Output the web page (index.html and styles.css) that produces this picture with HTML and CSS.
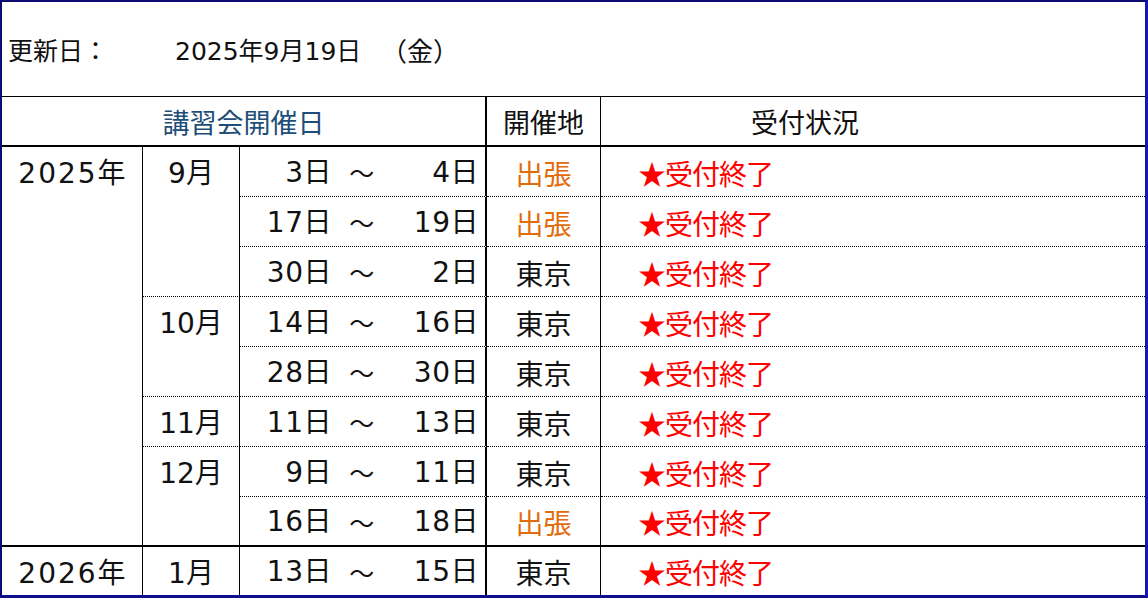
FILE: index.html
```html
<!DOCTYPE html>
<html lang="ja">
<head>
<meta charset="utf-8">
<title>講習会開催日</title>
<link rel="stylesheet" href="styles.css">
</head>
<body>
<div class="sheet">
  <div class="updated">
    <span class="upd-label">更新日：</span>
    <span class="upd-date">2025年9月19日</span>
    <span class="upd-week">（金）</span>
  </div>
  <div class="grid">
    <div class="hd hd-date">講習会開催日</div>
    <div class="hd hd-place">開催地</div>
    <div class="hd hd-status">受付状況</div>

    <div class="year y2025">2025年</div>
    <div class="month m9">9月</div>
    <div class="month m10">10月</div>
    <div class="month m11">11月</div>
    <div class="month m12">12月</div>

    <div class="date r1"><span class="d1">3日</span><span class="til">～</span><span class="d2">4日</span></div>
    <div class="place r1 trip">出張</div>
    <div class="status r1">★受付終了</div>

    <div class="date r2"><span class="d1">17日</span><span class="til">～</span><span class="d2">19日</span></div>
    <div class="place r2 trip">出張</div>
    <div class="status r2">★受付終了</div>

    <div class="date r3"><span class="d1">30日</span><span class="til">～</span><span class="d2">2日</span></div>
    <div class="place r3">東京</div>
    <div class="status r3">★受付終了</div>

    <div class="date r4"><span class="d1">14日</span><span class="til">～</span><span class="d2">16日</span></div>
    <div class="place r4">東京</div>
    <div class="status r4">★受付終了</div>

    <div class="date r5"><span class="d1">28日</span><span class="til">～</span><span class="d2">30日</span></div>
    <div class="place r5">東京</div>
    <div class="status r5">★受付終了</div>

    <div class="date r6"><span class="d1">11日</span><span class="til">～</span><span class="d2">13日</span></div>
    <div class="place r6">東京</div>
    <div class="status r6">★受付終了</div>

    <div class="date r7"><span class="d1">9日</span><span class="til">～</span><span class="d2">11日</span></div>
    <div class="place r7">東京</div>
    <div class="status r7">★受付終了</div>

    <div class="date r8 yearend"><span class="d1">16日</span><span class="til">～</span><span class="d2">18日</span></div>
    <div class="place r8 yearend trip">出張</div>
    <div class="status r8 yearend">★受付終了</div>

    <div class="year y2026">2026年</div>
    <div class="month m1">1月</div>
    <div class="date r9 last"><span class="d1">13日</span><span class="til">～</span><span class="d2">15日</span></div>
    <div class="place r9 last">東京</div>
    <div class="status r9 last">★受付終了</div>
  </div>
</div>
</body>
</html>
```

FILE: styles.css
```css
* { box-sizing: border-box; }
html, body { margin: 0; padding: 0; background: #ffffff; }
body {
  font-family: "DejaVu Sans", "Noto Sans CJK JP", sans-serif;
  color: #111111;
}
.sheet {
  width: 1148px;
  height: 598px;
  border-top: 2px solid #0c0c74;
  border-left: 2px solid #0c0c74;
  border-right: 3px solid #1616b4;
  border-bottom: 3px solid #0e0e8c;
  display: flex;
  flex-direction: column;
  overflow: hidden;
}
.updated {
  height: 95px;
  border-bottom: 1px solid #000;
  display: flex;
  align-items: center;
  padding-left: 6px;
  font-size: 25px;
}
.upd-label { width: 167px; font-family: "Noto Sans CJK JP", sans-serif; }
.upd-date { width: 206px; }
.upd-week { font-family: "Noto Sans CJK JP", sans-serif; font-size: 26px; }

.grid {
  flex: 1;
  display: grid;
  grid-template-columns: 141px 97px 247px 114px 1fr;
  grid-template-rows: 50px repeat(8, 50px) 1fr;
  font-size: 28px;
}
.grid > div {
  display: flex;
  align-items: center;
  line-height: 1;
}
.hd { border-bottom: 2px solid #000; font-size: 27px; }
.hd-date {
  grid-column: 1 / 4;
  justify-content: center;
  color: #1f4e79;
  border-right: 2px solid #000;
  font-family: "Noto Sans CJK JP", sans-serif;
}
.hd-place {
  justify-content: center;
  border-right: 1px solid #000;
  font-family: "Noto Sans CJK JP", sans-serif;
}
.hd-status {
  padding-left: 150px;
  font-family: "Noto Sans CJK JP", sans-serif;
}

.grid > .year, .grid > .month {
  align-items: flex-start;
  justify-content: center;
  padding-top: 13px;
  border-right: 1px solid #000;
}
.year { grid-column: 1; letter-spacing: 2px; padding-left: 2px; }
.y2025 { grid-row: 2 / 10; border-bottom: 2px solid #000; }
.y2026 { grid-row: 10; }
.month { grid-column: 2; }
.m9 { grid-row: 2 / 5; border-bottom: 1px dotted #000; }
.m10 { grid-row: 5 / 7; border-bottom: 1px dotted #000; }
.m11 { grid-row: 7 / 8; border-bottom: 1px dotted #000; }
.m12 { grid-row: 8 / 10; border-bottom: 2px solid #000; }
.m1 { grid-row: 10; }

.date, .place, .status { border-bottom: 1px dotted #000; padding-top: 2px; }
.grid > .date {
  grid-column: 3;
  display: grid;
  grid-template-columns: 92px 60px 1fr;
  align-items: center;
  padding-right: 6px;
  border-right: 2px solid #000;
  letter-spacing: 0.5px;
}
.d1, .d2 { text-align: right; }
.til { text-align: center; font-family: "Noto Sans CJK JP", sans-serif; font-size: 25px; }
.place {
  grid-column: 4;
  justify-content: center;
  border-right: 1px solid #000;
  font-family: "Noto Sans CJK JP", sans-serif;
}
.trip { color: #e26b0a; }
.status {
  grid-column: 5;
  padding-left: 37px;
  color: #ff0000;
  font-family: "Noto Sans CJK JP", sans-serif;
  letter-spacing: -1px;
}
.r1 { grid-row: 2; } .r2 { grid-row: 3; } .r3 { grid-row: 4; }
.r4 { grid-row: 5; } .r5 { grid-row: 6; } .r6 { grid-row: 7; }
.r7 { grid-row: 8; } .r8 { grid-row: 9; } .r9 { grid-row: 10; }
.grid > .yearend { border-bottom: 2px solid #000; }
.grid > .last { border-bottom: none; }
```
